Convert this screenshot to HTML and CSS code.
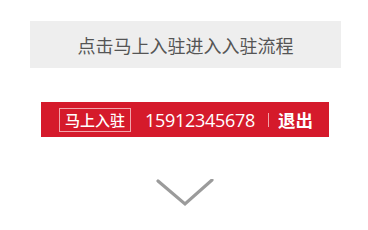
FILE: index.html
```html
<!DOCTYPE html>
<html lang="zh-CN">
<head>
<meta charset="utf-8">
<link rel="stylesheet" href="styles.css">
</head>
<body>
<div class="page">
  <div class="guide">点击马上入驻进入入驻流程</div>
  <div class="bar">
    <span class="tag">马上入驻</span>
    <span class="phone">15912345678</span>
    <span class="sep"></span>
    <span class="logout">退出</span>
  </div>
  <div class="arrow">
    <svg width="60" height="30" viewBox="0 0 60 30">
      <polyline points="2,2 29,25 56,1" fill="none" stroke="#9b9b9b" stroke-width="3.2" stroke-linecap="round" stroke-linejoin="miter"/>
    </svg>
  </div>
</div>
</body>
</html>
```

FILE: styles.css
```css
html, body {
  margin: 0;
  padding: 0;
  background: #ffffff;
}
.page {
  width: 368px;
  height: 230px;
  padding-top: 21px;
  box-sizing: border-box;
  font-family: "Noto Sans CJK SC", "Noto Sans", sans-serif;
}
.guide {
  margin-left: 30px;
  width: 311px;
  height: 47px;
  background: #eeeeee;
  color: #555555;
  font-size: 18px;
  display: flex;
  align-items: center;
  justify-content: center;
}
.bar {
  margin-top: 34px;
  margin-left: 41px;
  width: 288px;
  height: 35px;
  background: #d51a2b;
  display: flex;
  align-items: center;
  color: #ffffff;
  padding-left: 18px;
  box-sizing: border-box;
}
.tag {
  border: 1px solid #f2a3aa;
  height: 22px;
  line-height: 22px;
  padding: 0 5px;
  font-size: 15px;
  font-weight: 500;
}
.phone {
  margin-left: 14px;
  font-size: 18px;
  font-weight: 500;
  font-family: "Open Sans", "Noto Sans", sans-serif;
  letter-spacing: -0.3px;
}
.sep {
  width: 1px;
  height: 14px;
  background: #f2a3aa;
  margin-left: 13px;
}
.logout {
  margin-left: 9px;
  font-size: 17.5px;
  font-weight: 700;
}
.arrow {
  margin-top: 42px;
  margin-left: 156px;
  width: 60px;
  height: 30px;
}
.arrow svg {
  display: block;
}
```
